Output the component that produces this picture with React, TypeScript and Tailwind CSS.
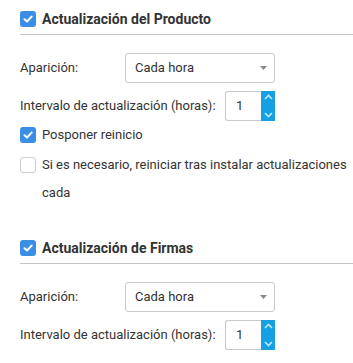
import React from "react";

function Check({ checked }: { checked: boolean }) {
  if (checked) {
    return (
      <div className="w-4 h-4 rounded-[3px] bg-[#3a8ee6] flex items-center justify-center shrink-0">
        <svg width="10" height="8" viewBox="0 0 10 8">
          <path d="M1.5 4.2 L4 6.5 L8.6 1.6" stroke="#fff" strokeWidth="2" fill="none" strokeLinecap="round" strokeLinejoin="round" />
        </svg>
      </div>
    );
  }
  return <div className="w-4 h-4 rounded-[3px] border border-[#cfcfcf] bg-white shrink-0" />;
}

function Select() {
  return (
    <div className="w-[150px] h-[30px] border border-[#c9c9c9] rounded-[3px] flex items-center pl-[9px] pr-[7px] justify-between bg-white">
      <span>Cada hora</span>
      <svg width="7" height="4" viewBox="0 0 7 4">
        <path d="M0 0 L7 0 L3.5 4 Z" fill="#8a8a8a" />
      </svg>
    </div>
  );
}

function Spinner() {
  return (
    <div className="flex items-stretch">
      <div className="w-[36px] h-[30px] border border-[#c9c9c9] border-r-0 rounded-l-[3px] flex items-center pl-[10px] bg-white">1</div>
      <div className="w-[14px] h-[30px] bg-[#15a0e3] flex flex-col items-center justify-between py-[3px]">
        <svg width="9" height="6" viewBox="0 0 9 6">
          <path d="M1 5 L4.5 1.5 L8 5" stroke="#c4e8f9" strokeWidth="1.6" fill="none" />
        </svg>
        <svg width="9" height="6" viewBox="0 0 9 6">
          <path d="M1 1 L4.5 4.5 L8 1" stroke="#c4e8f9" strokeWidth="1.6" fill="none" />
        </svg>
      </div>
    </div>
  );
}

function Header({ title }: { title: string }) {
  return (
    <div className="flex items-center pb-[7px] border-b border-[#c4c4c4]">
      <Check checked />
      <span className="ml-[6px] font-bold text-[14px] text-[#333] leading-4">{title}</span>
    </div>
  );
}

function Apparition() {
  return (
    <div className="flex items-center mt-[18px] h-[30px]">
      <span className="w-[105px]">Aparición:</span>
      <Select />
    </div>
  );
}

function Interval() {
  return (
    <div className="flex items-center mt-[8px] h-[30px]">
      <span className="w-[205px] shrink-0">Intervalo de actualización (horas):</span>
      <Spinner />
    </div>
  );
}

export default function App() {
  return (
    <div className="w-[353px] h-[363px] bg-white pl-5 pt-[11px] text-[13px] text-[#333] overflow-hidden" style={{ fontFamily: "Roboto, 'Liberation Sans', sans-serif" }}>
      <Header title="Actualización del Producto" />
      <Apparition />
      <Interval />
      <div className="flex items-center mt-[6px] h-4">
        <Check checked />
        <span className="ml-[6px]">Posponer reinicio</span>
      </div>
      <div className="flex items-start mt-[8px]">
        <div className="mt-[6px]">
          <Check checked={false} />
        </div>
        <span className="ml-[6px] leading-[28px] w-[310px]">Si es necesario, reiniciar tras instalar actualizaciones cada</span>
      </div>
      <div className="mt-[33px]">
        <Header title="Actualización de Firmas" />
      </div>
      <Apparition />
      <Interval />
    </div>
  );
}
